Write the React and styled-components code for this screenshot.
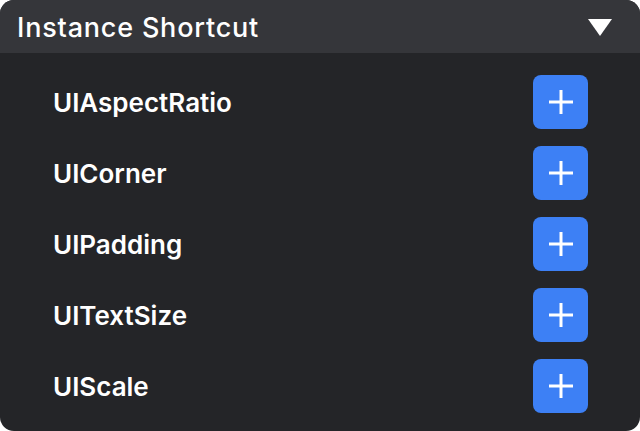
import React from 'react'
import styled, { createGlobalStyle } from 'styled-components'

const GlobalStyle = createGlobalStyle`
  html, body {
    margin: 0;
    padding: 0;
    background: #ffffff;
  }
  body {
    font-family: Inter, "Noto Sans", "Liberation Sans", sans-serif;
  }
`

const items = ['UIAspectRatio', 'UICorner', 'UIPadding', 'UITextSize', 'UIScale']

const Panel = styled.div`
  width: 640px;
  height: 431px;
  background: #242528;
  border-radius: 14px;
  overflow: hidden;
  display: flex;
  flex-direction: column;
`

const Header = styled.div`
  height: 53px;
  background: #35363a;
  display: flex;
  align-items: center;
  justify-content: space-between;
  padding: 2px 28px 0 17px;
  box-sizing: border-box;
`

const Title = styled.h1`
  margin: 0;
  color: #ffffff;
  font-size: 27px;
  font-weight: 500;
  letter-spacing: 0.8px;
`

const Arrow = styled.div`
  width: 0;
  height: 0;
  border-left: 12px solid transparent;
  border-right: 12px solid transparent;
  border-top: 17px solid #ffffff;
`

const List = styled.ul`
  list-style: none;
  margin: 0;
  padding: 13px 52px 0 53px;
  display: flex;
  flex-direction: column;
`

const Row = styled.li`
  height: 71px;
  display: flex;
  align-items: center;
  justify-content: space-between;
`

const Label = styled.span`
  color: #ffffff;
  font-size: 26px;
  font-weight: 600;
  margin-top: 2px;
`

const AddButton = styled.button`
  width: 55px;
  height: 54px;
  border: none;
  border-radius: 8px;
  background: #3d80f5;
  display: flex;
  align-items: center;
  justify-content: center;
  padding: 0;
  cursor: pointer;
`

const Plus = () => (
  <svg width="26" height="26" viewBox="0 0 26 26">
    <path d="M13 1v24M1 13h24" stroke="#fff" strokeWidth="3" />
  </svg>
)

export default function App() {
  return (
    <>
      <GlobalStyle />
      <Panel>
        <Header>
          <Title>Instance Shortcut</Title>
          <Arrow />
        </Header>
        <List>
          {items.map((name) => (
            <Row key={name}>
              <Label>{name}</Label>
              <AddButton aria-label={`Add ${name}`}>
                <Plus />
              </AddButton>
            </Row>
          ))}
        </List>
      </Panel>
    </>
  )
}
